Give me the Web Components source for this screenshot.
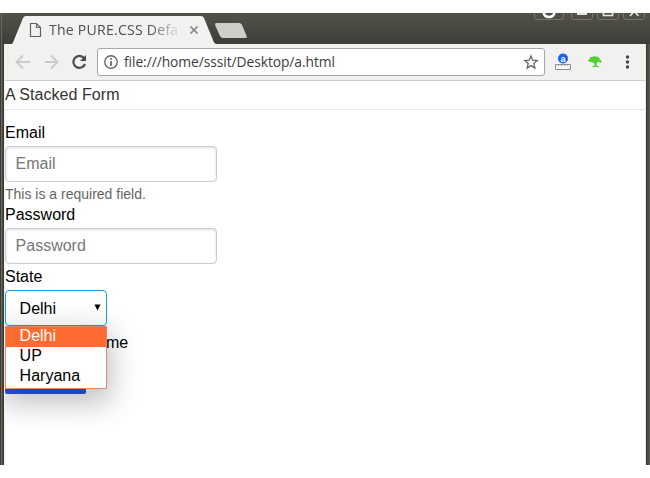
<!DOCTYPE html>
<html lang="en"><head><meta charset="utf-8"><title>The PURE.CSS Default Form</title>
<style>html,body{margin:0;background:#fff;overflow:hidden}body{padding-top:13px}</style></head><body>
<browser-window>
<title-bar slot="title">The PURE.CSS Defau</title-bar>
<tool-bar slot="tools">file:///home/sssit/Desktop/a.html</tool-bar>
<stacked-form></stacked-form>
</browser-window>
<script>
const define=(name,html)=>customElements.define(name,class extends HTMLElement{
 constructor(){super();const t=document.createElement('template');t.innerHTML=html;this.attachShadow({mode:'open'}).append(t.content.cloneNode(true));
 this.shadowRoot.querySelectorAll('[data-from]').forEach(e=>e.textContent=this.getAttribute(e.dataset.from)||'');}
});
define('browser-window',`<style>
:host{display:flex;flex-direction:column;width:650px;height:452px;background:#3c3b37}
.body{display:flex;flex:1;min-height:0}
.edge{width:4px;flex:none;background:linear-gradient(90deg,#3c3b37 0 1px,#6b695f 1px 2px,#4a4942 2px 3px,#3a3934 3px)}
.edge.r{background:linear-gradient(90deg,#3a3934 0 1px,#4a4942 1px 3px,#5c5a51 3px)}
.page{flex:1;min-width:0;background:#fff;border-left:1px solid #f1f0ee;border-right:1px solid #e9e8e5;box-sizing:border-box;display:flex;flex-direction:column}
</style><slot name="title"></slot><div class="body"><div class="edge"></div><div class="page"><slot name="tools"></slot><slot></slot></div><div class="edge r"></div></div>`);
define('title-bar',`<style>
:host{display:grid;height:31px;flex:none;background:linear-gradient(#53524a,#3d3c37);font:14.1px/20px "Open Sans","Noto Sans",sans-serif;color:#504f4c;overflow:hidden}
svg,.tab{grid-area:1/1}
.tab{padding:7px 0 0 49px;width:131px;overflow:hidden;white-space:nowrap;z-index:1}
.tab span{display:block;letter-spacing:.22px;-webkit-mask-image:linear-gradient(90deg,#000 100px,transparent 132px);mask-image:linear-gradient(90deg,#000 100px,transparent 132px)}
</style>
<svg width="650" height="31" fill="none">
<path d="M1.500 0V31" stroke="#6b695f"/>
<path d="M11 31C13 31 13 29 14 27L23 5Q24 3 26 3H201Q203 3 204 5L213 27Q214 31 217 31Z" fill="#f2f1f0"/>
<path d="M216 10H239Q241 10 242 12L247 24Q247 25 245 25H223Q221 25 220 23L215 12Q215 10 216 10Z" fill="#cecdca"/>
<path d="M30.500 10.500H36.500L40.500 14.500V23.500H30.500ZM36.500 10.500V14.500H40.500" stroke="#62615f" stroke-width="1.200"/>
<path d="M190.500 13.500L197.500 20.500M197.500 13.500L190.500 20.500" stroke="#868582" stroke-width="1.700"/>
<g stroke="#77756c"><path d="M534.500 0V4Q534.500 6.500 537 6.500H561Q563.500 6.500 563.500 4V0M571.500 0V4Q571.500 6.500 574 6.500H590Q592.500 6.500 592.500 4V0M597.500 0V4Q597.500 6.500 600 6.500H616Q618.500 6.500 618.500 4V0M623.500 0V4Q623.500 6.500 626 6.500H642Q644.500 6.500 644.500 4V0"/></g>
<path d="M543.500 -1Q544 4 549 4T554.500 -1" stroke="#fff" stroke-width="2.600"/><path d="M577 0H587V2H577Z" fill="#e4e3df"/>
<path d="M603.500 0V2.500H612.500V0M630 3L633.500 -1M638.500 3L635 -1" stroke="#e4e3df" stroke-width="1.700"/>
</svg><div class="tab"><span><slot></slot></span></div>`);
define('tool-bar',`<style>
:host{display:flex;align-items:center;height:37px;box-sizing:border-box;border-bottom:1px solid #d0cfcd;background:#f2f1f0;flex:none;font:13.8px/20px "Open Sans","Noto Sans",sans-serif;color:#3c3c3c}
.nav{width:92px;flex:none}
.url{box-sizing:border-box;width:448px;height:28px;border:1px solid #a8a7a5;border-radius:3px;background:#fff;display:flex;align-items:center}
.url span{flex:1;letter-spacing:-.06px;white-space:nowrap}.url svg{flex:none}
</style>
<svg class="nav" width="92" height="36" fill="none"><path d="M25 18H12M18 11.500L11.500 18L18 24.500M40 18H52M46 11.500L52.500 18L46 24.500" stroke="#cbcac8" stroke-width="1.900"/><path d="M79 14A6 6 0 1 0 80 20" stroke="#4b4a48" stroke-width="2.200"/><path d="M81 11V17H75Z" fill="#4b4a48"/></svg>
<div class="url"><svg width="26" height="26" fill="none"><circle cx="13" cy="13" r="6.200" stroke="#666" stroke-width="1.400"/><path d="M13 12V17M13 9V10.700" stroke="#666" stroke-width="1.700"/></svg><span><slot></slot></span><svg width="26" height="26" fill="none"><path d="M13 7L14.700 11.200L19.200 11.600L15.800 14.500L16.900 19L13 16.600L9.100 19L10.200 14.500L6.800 11.600L11.300 11.200Z" stroke="#666" stroke-width="1.300"/></svg></div>
<svg width="100" height="36"><circle cx="18" cy="14.500" r="5" fill="#1b5ff5"/><text x="18" y="17.500" text-anchor="middle" fill="#fff" style="font:bold 9px 'Liberation Sans',sans-serif">a</text><path d="M10.500 20.500H25.500V25.500H10.500Z" fill="#f6f6f6" stroke="#8f8f8f"/><path d="M13.500 21V22M16.500 21V22M19.500 21V22M22.500 21V22" stroke="#aaa"/>
<path d="M43 16L45 15L45 13L48 13L49 11.500L51 13L52 12L53 13.500L55 14L54.500 15.500L57 17L55.500 19L53 17.500L51.500 19.500L52 22H54V23H47.500V22L50 21.500L49 19L46 18L44 18Z" fill="#55cf36"/><g fill="#444"><circle cx="82.500" cy="13" r="1.700"/><circle cx="82.500" cy="18" r="1.700"/><circle cx="82.500" cy="23" r="1.700"/></g></svg>`);
define('form-field',`<style>:host{display:block}
label{display:block;height:20px;line-height:22px}
div{box-sizing:border-box;width:212px;height:36px;margin:4px 0 2px;padding-left:9.6px;line-height:34px;border:1px solid #ccc;border-radius:4px;box-shadow:inset 0 1px 3px #ddd;color:#777}
</style><label data-from="label"></label><div data-from="label"></div>`);
define('state-select',`<style>
:host{display:block;position:relative;width:102px;height:36px;margin-top:4px}
.box{display:flex;box-sizing:border-box;height:36px;border:1px solid #129fea;border-radius:4px;padding:0 5px 0 13.600px;line-height:35px;align-items:center;justify-content:space-between;background:#fff}
.menu{position:absolute;z-index:2;top:36px;left:0;width:102px;height:63px;box-sizing:border-box;border:1px solid #db8b6b;background:#fff;box-shadow:0 10px 30px 3px rgba(0,0,0,.27)}
.menu div{height:20px;line-height:18px;padding-left:13.600px}.menu .on{background:#ff6a30;color:#fff}
</style><div class="box"><span>Delhi</span><svg width="7" height="8"><path d="M.500 .500H6.500L3.500 6.500Z" fill="#000"/></svg></div>
<div class="menu"><div class="on">Delhi</div><div>UP</div><div>Haryana</div></div>`);
define('stacked-form',`<style>
:host{display:block;flex:1;min-height:0;font:16px/20px "Liberation Sans",Arial,sans-serif;color:#000;overflow:hidden}
.legend{height:28px;line-height:28px;border-bottom:1px solid #e5e5e5;color:#333;margin-bottom:12px;letter-spacing:.05px}
.help{height:20px;line-height:20px;font-size:14px;color:#666}.state{height:20px;line-height:22px}
.remember{padding-left:101px;margin-top:6px;line-height:22px;height:20px}.button{width:81px;height:36px;margin-top:6px;background:#2859e8;border-radius:2px}
</style><div class="legend">A Stacked Form</div><form-field label="Email"></form-field><div class="help">This is a required field.</div><form-field label="Password"></form-field><div class="state">State</div><state-select></state-select><div class="remember">me</div><div class="button"></div>`);
</script></body></html>
